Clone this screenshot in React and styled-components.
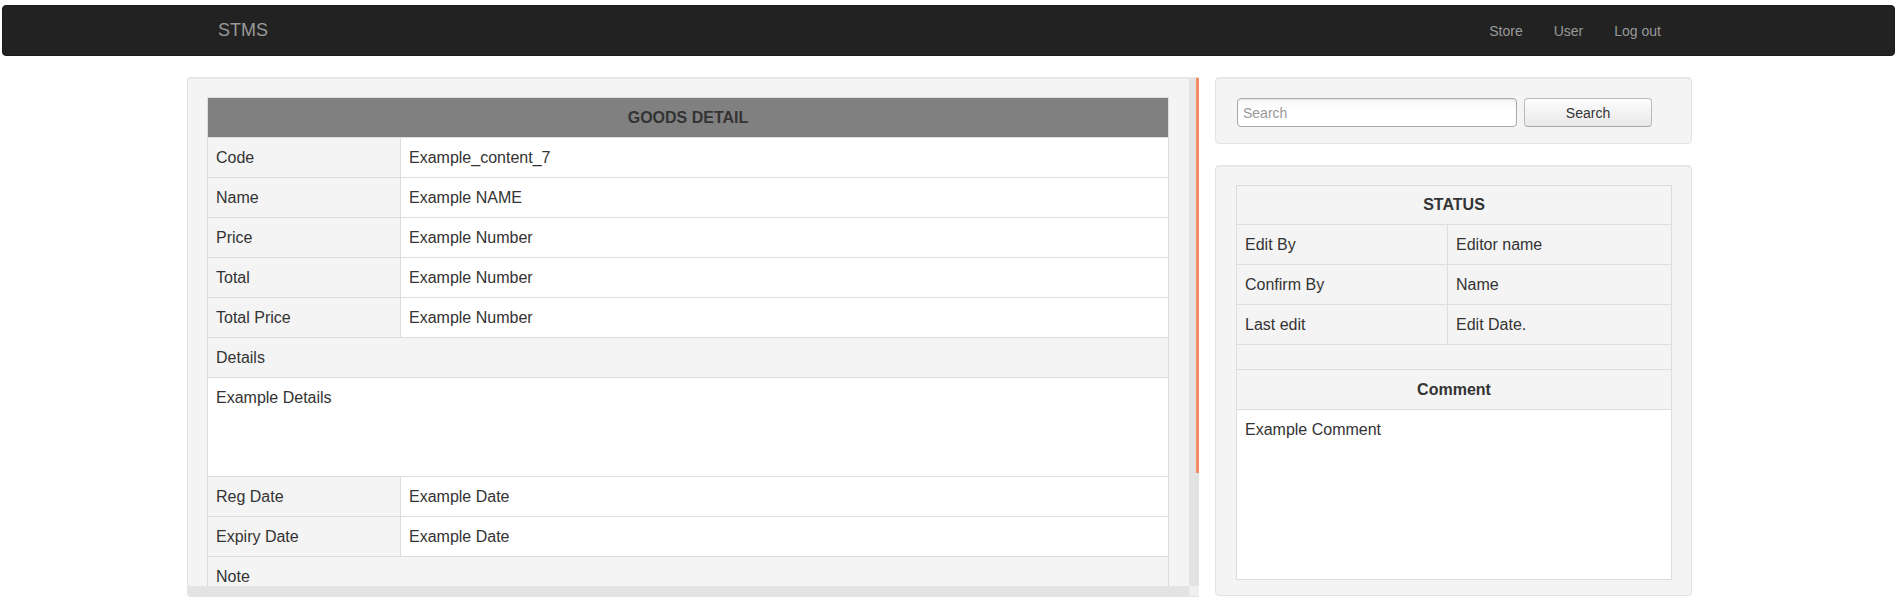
import React from 'react';
import styled, { createGlobalStyle } from 'styled-components';

const colors = {
  text: '#333',
  muted: '#999',
  line: '#ddd',
  well: '#f4f4f4',
  wellBorder: '#e3e3e3',
  headGray: '#808080',
  nav: '#222',
  track: '#e3e3e3',
  thumb: '#ef8a62',
};

const GlobalStyle = createGlobalStyle`
  html, body {
    margin: 0;
    padding: 0;
    background: #fff;
  }
  body {
    font-family: "Liberation Sans", Arial, sans-serif;
    font-size: 16px;
    color: ${colors.text};
  }
  * { box-sizing: border-box; }
`;

const Navbar = styled.nav`
  margin: 5px 2px 0;
  height: 51px;
  background: ${colors.nav};
  border: 1px solid #1a1a1a;
  border-radius: 4px;
`;
const NavInner = styled.div`
  width: 1505px;
  height: 100%;
  margin-left: 184px;
  padding: 0 31px;
  display: flex;
  align-items: center;
  justify-content: space-between;
`;
const Brand = styled.a`
  color: ${colors.muted};
  font-size: 18px;
  text-decoration: none;
`;
const NavLinks = styled.div`
  display: flex;
  gap: 31px;
`;
const NavLink = styled.a`
  color: ${colors.muted};
  font-size: 14px;
  text-decoration: none;
`;

const Main = styled.main`
  display: flex;
  align-items: flex-start;
  gap: 16px;
  margin: 21px 0 0 187px;
`;

const Well = styled.div`
  background: ${colors.well};
  border: 1px solid ${colors.wellBorder};
  border-radius: 4px;
  box-shadow: inset 0 1px 1px rgba(0, 0, 0, 0.04);
`;

// scroll box: content + fake scrollbars (vertical thumb is the orange strip)
const DetailWell = styled(Well)`
  width: 1012px;
  height: 520px;
  display: grid;
  grid-template-columns: 1fr 10px;
  grid-template-rows: 1fr 10px;
  overflow: hidden;
  border-radius: 4px 0 0 4px;
  border-right: none;
`;
const ScrollContent = styled.div`
  overflow: hidden;
  padding: 19px 20px 0 19px;
`;
const VTrack = styled.div`
  background: ${colors.track};
  display: flex;
  justify-content: flex-end;
  align-items: flex-start;
`;
const VThumb = styled.div`
  width: 3px;
  height: 395px;
  background: ${colors.thumb};
`;
const HTrack = styled.div`
  background: ${colors.track};
`;
const Corner = styled.div`
  background: #efefef;
`;

const Side = styled.div`
  width: 477px;
  display: flex;
  flex-direction: column;
  gap: 21px;
`;

const SearchWell = styled(Well)`
  height: 67px;
  padding: 4px 21px 0;
  display: flex;
  align-items: center;
  gap: 7px;
`;
const SearchInput = styled.input`
  width: 280px;
  height: 29px;
  padding: 0 5px;
  border: 1px solid #aaa;
  border-radius: 4px;
  background: linear-gradient(#f6f6f6, #fff 40%);
  box-shadow: inset 0 1px 2px rgba(0, 0, 0, 0.08);
  font-family: "Liberation Sans", Arial, sans-serif;
  font-size: 14px;
  color: ${colors.text};
  outline: none;
  &::placeholder { color: ${colors.muted}; }
`;
const SearchButton = styled.button`
  width: 128px;
  height: 29px;
  border: 1px solid #bbb;
  border-bottom-color: #a8a8a8;
  border-radius: 4px;
  background: linear-gradient(#fdfdfd, #e8e8e8);
  font-family: "Liberation Sans", Arial, sans-serif;
  font-size: 14px;
  color: ${colors.text};
`;

const StatusWell = styled(Well)`
  padding: 19px 19px 15px 20px;
`;

const Table = styled.table`
  width: 100%;
  border-collapse: collapse;
  border: 1px solid ${colors.line};
  font-size: 16px;
  line-height: 20px;
`;
const HeadCell = styled.th`
  height: ${({ h }) => h || 40}px;
  padding: 0 8px;
  background: ${({ dark }) => (dark ? colors.headGray : colors.well)};
  border: 1px solid ${colors.line};
  font-weight: bold;
  text-align: center;
  vertical-align: middle;
  color: ${colors.text};
`;
const Cell = styled.td`
  height: ${({ h }) => h || 40}px;
  width: ${({ w }) => (w ? `${w}px` : 'auto')};
  padding: ${({ top }) => (top ? '10px 8px 0' : '0 8px')};
  background: ${({ white }) => (white ? '#fff' : colors.well)};
  border: 1px solid ${colors.line};
  vertical-align: ${({ top }) => (top ? 'top' : 'middle')};
  text-align: left;
`;

const goods = [
  ['Code', 'Example_content_7'],
  ['Name', 'Example NAME'],
  ['Price', 'Example Number'],
  ['Total', 'Example Number'],
  ['Total Price', 'Example Number'],
];
const dates = [
  ['Reg Date', 'Example Date'],
  ['Expiry Date', 'Example Date'],
];
const status = [
  ['Edit By', 'Editor name'],
  ['Confirm By', 'Name'],
  ['Last edit', 'Edit Date.'],
];

const App = () => (
  <>
    <GlobalStyle />
    <Navbar>
      <NavInner>
        <Brand href="#">STMS</Brand>
        <NavLinks>
          <NavLink href="#">Store</NavLink>
          <NavLink href="#">User</NavLink>
          <NavLink href="#">Log out</NavLink>
        </NavLinks>
      </NavInner>
    </Navbar>
    <Main>
      <DetailWell>
        <ScrollContent>
          <Table>
            <thead>
              <tr><HeadCell dark colSpan={2}>GOODS DETAIL</HeadCell></tr>
            </thead>
            <tbody>
              {goods.map(([k, v]) => (
                <tr key={k}>
                  <Cell w={193}>{k}</Cell>
                  <Cell white>{v}</Cell>
                </tr>
              ))}
              <tr><Cell colSpan={2}>Details</Cell></tr>
              <tr><Cell colSpan={2} white top h={99}>Example Details</Cell></tr>
              {dates.map(([k, v]) => (
                <tr key={k}>
                  <Cell w={193}>{k}</Cell>
                  <Cell white>{v}</Cell>
                </tr>
              ))}
              <tr><Cell colSpan={2}>Note</Cell></tr>
              <tr><Cell colSpan={2} white h={99} /></tr>
            </tbody>
          </Table>
        </ScrollContent>
        <VTrack><VThumb /></VTrack>
        <HTrack />
        <Corner />
      </DetailWell>
      <Side>
        <SearchWell>
          <SearchInput placeholder="Search" />
          <SearchButton>Search</SearchButton>
        </SearchWell>
        <StatusWell>
          <Table>
            <thead>
              <tr><HeadCell colSpan={2} h={39}>STATUS</HeadCell></tr>
            </thead>
            <tbody>
              {status.map(([k, v]) => (
                <tr key={k}>
                  <Cell w={211}>{k}</Cell>
                  <Cell>{v}</Cell>
                </tr>
              ))}
              <tr><Cell colSpan={2} h={25} /></tr>
              <tr><HeadCell colSpan={2}>Comment</HeadCell></tr>
              <tr><Cell colSpan={2} white top h={170}>Example Comment</Cell></tr>
            </tbody>
          </Table>
        </StatusWell>
      </Side>
    </Main>
  </>
);

export default App;
